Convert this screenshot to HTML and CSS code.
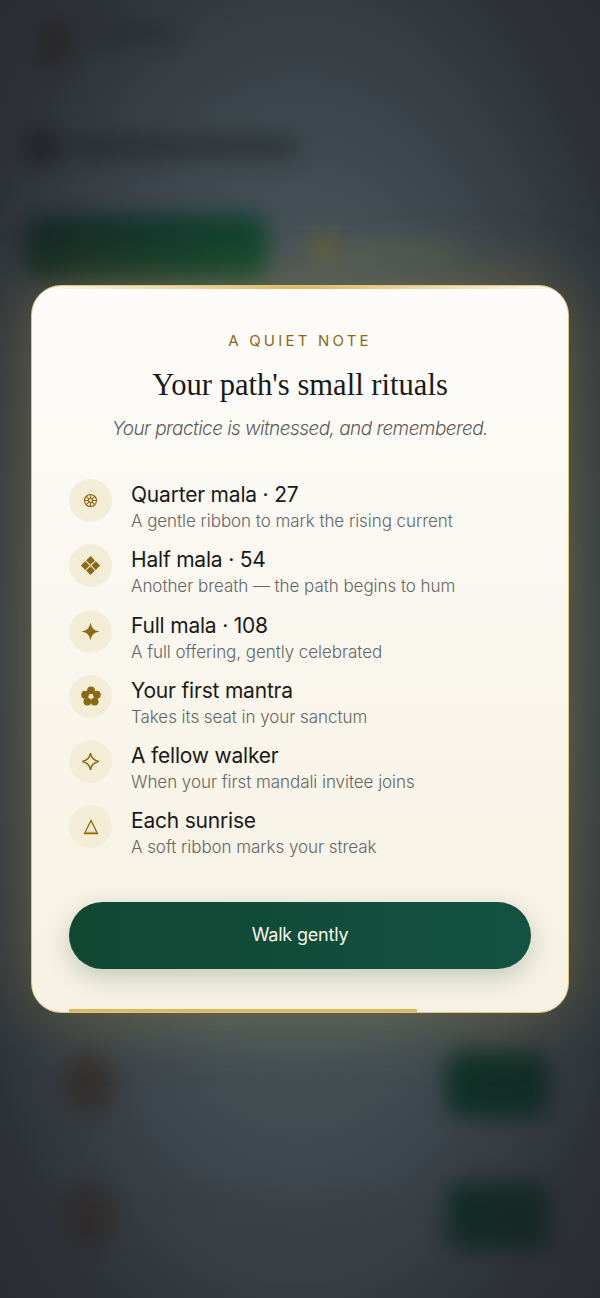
FILE: index.html
```html
<!DOCTYPE html>
<html lang="en">
<head>
<meta charset="utf-8">
<title>A quiet note</title>
<link rel="stylesheet" href="styles.css">
</head>
<body>
<div class="page" aria-hidden="true">
  <div class="top-bar"><span class="logo"></span><span class="brand"></span></div>
  <div class="heading"><span class="heading-icon"></span><span class="heading-text"></span></div>
  <div class="actions"><span class="cta"></span><span class="gold-dot"></span><span class="action-text"></span></div>
  <div class="list">
    <div class="list-row"><span class="avatar"></span><span class="row-lines"><i class="line-a"></i><i class="line-b"></i></span><span class="row-btn"></span></div>
    <div class="list-row"><span class="avatar"></span><span class="row-lines"><i class="line-a"></i><i class="line-b"></i></span><span class="row-btn"></span></div>
  </div>
</div>
<div class="overlay">
  <section class="modal">
    <span class="top-line"></span>
    <p class="eyebrow">A QUIET NOTE</p>
    <h1 class="title">Your path's small rituals</h1>
    <p class="subtitle">Your practice is witnessed, and remembered.</p>
    <ul class="rituals">
      <li class="ritual">
        <span class="medal"><svg class="ic-small" viewBox="0 0 16 16"><g fill="none" stroke="#8b6914" stroke-width="1.2"><circle cx="8" cy="8" r="6.400"/><circle cx="8" cy="8" r="2.100"/><path d="M8 1.600V5.900M8 10.100v4.300M1.600 8h4.300M10.100 8h4.300M3.500 3.500l3 3M9.500 9.500l3 3M12.500 3.500l-3 3M6.500 9.500l-3 3"/></g></svg></span>
        <div class="ritual-text"><h2 class="ritual-name">Quarter mala · 27</h2><p class="ritual-desc">A gentle ribbon to mark the rising current</p></div>
      </li>
      <li class="ritual">
        <span class="medal"><svg class="ic" viewBox="0 0 24 24"><path fill="#8b6914" d="M12 1.200l5 5-5 5-5-5zM12 12.800l5 5-5 5-5-5zM6 7l5 5-5 5-5-5zM18 7l5 5-5 5-5-5z"/></svg></span>
        <div class="ritual-text"><h2 class="ritual-name">Half mala · 54</h2><p class="ritual-desc">Another breath — the path begins to hum</p></div>
      </li>
      <li class="ritual">
        <span class="medal"><svg class="ic" viewBox="0 0 24 24"><path fill="#8b6914" d="M12 1.500C13 8 16 11 22.500 12 16 13 13 16 12 22.500 11 16 8 13 1.500 12 8 11 11 8 12 1.500z"/></svg></span>
        <div class="ritual-text"><h2 class="ritual-name">Full mala · 108</h2><p class="ritual-desc">A full offering, gently celebrated</p></div>
      </li>
      <li class="ritual">
        <span class="medal"><svg class="ic-flower" viewBox="0 0 24 24"><g fill="#8b6914"><circle cx="12" cy="5.400" r="4.700"/><circle cx="5" cy="10.500" r="4.700"/><circle cx="19" cy="10.500" r="4.700"/><circle cx="7.600" cy="18.700" r="4.700"/><circle cx="16.400" cy="18.700" r="4.700"/></g><circle cx="12" cy="12.400" r="2.700" fill="#f3ecd6"/></svg></span>
        <div class="ritual-text"><h2 class="ritual-name">Your first mantra</h2><p class="ritual-desc">Takes its seat in your sanctum</p></div>
      </li>
      <li class="ritual">
        <span class="medal"><svg class="ic" viewBox="0 0 24 24"><path fill="none" stroke="#8b6914" stroke-width="1.700" d="M12 2.500C13 8.500 15.500 11 21.500 12 15.500 13 13 15.500 12 21.500 11 15.500 8.500 13 2.500 12 8.500 11 11 8.500 12 2.500z"/></svg></span>
        <div class="ritual-text"><h2 class="ritual-name">A fellow walker</h2><p class="ritual-desc">When your first mandali invitee joins</p></div>
      </li>
      <li class="ritual">
        <span class="medal"><svg class="ic-tri" viewBox="0 0 18 18"><path fill="none" stroke="#8b6914" stroke-width="1.300" d="M9 2.500L2.500 15.500h13z"/><path fill="none" stroke="#c9a227" stroke-width="1.200" d="M4 14.300h10"/></svg></span>
        <div class="ritual-text"><h2 class="ritual-name">Each sunrise</h2><p class="ritual-desc">A soft ribbon marks your streak</p></div>
      </li>
    </ul>
    <button class="walk" type="button">Walk gently</button>
    <span class="progress"></span>
  </section>
</div>
</body>
</html>
```
FILE: styles.css
```css
* { box-sizing: border-box; }
html, body { margin: 0; height: 100%; }
body {
  position: relative;
  width: 600px;
  height: 1298px;
  overflow: hidden;
  background: #5f6e74;
  font-family: "Inter", "Liberation Sans", sans-serif;
}
.page {
  height: 1298px;
  padding: 14px 24px 0;
  filter: blur(11px);
  background: #5f6e74;
}
.top-bar { display: flex; align-items: center; gap: 12px; height: 62px; padding-left: 14px; }
.logo { width: 36px; height: 48px; border-radius: 50%; background: #4a2e14; opacity: .6; }
.brand { width: 95px; height: 16px; margin-bottom: 22px; background: #2c3030; border-radius: 8px; opacity: .5; }
.heading { display: flex; align-items: center; gap: 8px; margin-top: 54px; height: 34px; }
.heading-icon { width: 36px; height: 34px; border-radius: 50%; background: #141418; opacity: .75; }
.heading-text { width: 232px; height: 20px; background: #2a322e; border-radius: 6px; opacity: .65; }
.actions { display: flex; align-items: center; margin-top: 51px; height: 66px; }
.cta { width: 244px; height: 66px; border-radius: 20px; background: linear-gradient(90deg, #0a3e2a, #0b5a38); }
.gold-dot { width: 30px; height: 30px; margin-left: 42px; border-radius: 50%; background: #a08a30; opacity: .6; }
.action-text { width: 110px; height: 14px; margin-left: 10px; background: #a09a6a; opacity: .4; }
.list { margin-top: 768px; display: flex; flex-direction: column; gap: 62px; }
.list-row { display: flex; align-items: center; height: 70px; padding-left: 38px; }
.avatar { width: 54px; height: 66px; border-radius: 50%; background: #4e3216; opacity: .55; }
.row-lines { flex: 1; display: flex; flex-direction: column; gap: 18px; padding: 0 34px; }
.row-lines i { display: block; height: 9px; background: #5a5a44; opacity: .4; }
.line-a { width: 240px; }
.line-b { width: 130px; margin-left: 90px; }
.row-btn { width: 104px; height: 68px; margin-right: 26px; border-radius: 18px; background: #07452c; }
.overlay {
  position: absolute;
  inset: 0;
  display: flex;
  justify-content: center;
  align-items: flex-start;
  padding-top: 285px;
  background: radial-gradient(ellipse 470px 960px at 50% 50%, rgba(20, 28, 36, .3) 0%, rgba(20, 28, 36, .34) 42%, rgba(28, 28, 34, .76) 82%, rgba(30, 30, 36, .86) 100%);
}
.modal {
  position: relative;
  width: 538px;
  height: 728px;
  padding: 45px 37px 0;
  border: 1px solid #e0c67a;
  border-radius: 30px;
  background: linear-gradient(180deg, #fdfcfa 0%, #f6f1e2 100%);
  box-shadow: 0 0 70px rgba(205, 170, 50, .3);
  text-align: center;
  overflow: hidden;
}
.top-line {
  position: absolute;
  top: -1px;
  left: 0;
  right: 0;
  height: 4px;
  background: linear-gradient(90deg, rgba(220, 185, 95, 0), #dcb95f 50%, rgba(220, 185, 95, 0));
}
.eyebrow {
  margin: 0;
  font-size: 15px;
  line-height: 20px;
  letter-spacing: 3.200px;
  color: #8b6914;
  font-weight: 400;
}
.title {
  margin: 14px 0 0;
  font: 400 30.600px/40px "Liberation Serif", serif;
  color: #1a1a1a;
}
.subtitle {
  margin: 11px 0 0;
  font-size: 19px;
  line-height: 26px;
  font-style: italic;
  font-weight: 300;
  letter-spacing: -.55px;
  color: #5c5c5c;
}
.rituals {
  list-style: none;
  margin: 37px 0 0;
  padding: 0;
  display: flex;
  flex-direction: column;
  gap: 11px;
  text-align: left;
}
.ritual { display: flex; align-items: flex-start; gap: 19px; height: 54.300px; }
.medal {
  display: flex;
  align-items: center;
  justify-content: center;
  flex: none;
  width: 43px;
  height: 43px;
  border-radius: 50%;
  background: radial-gradient(circle, #f3ecd4 0%, #f3eddb 100%);
}
.ic { width: 21px; height: 21px; }
.ic-small { width: 15px; height: 15px; }
.ic-flower { width: 20px; height: 20px; }
.ic-tri { width: 18px; height: 18px; }
.ritual-text { margin-top: 2px; }
.ritual-name {
  margin: 0;
  font-size: 21px;
  line-height: 28px;
  font-weight: 400;
  letter-spacing: -.2px;
  color: #1a1a1a;
}
.ritual-desc {
  margin: 0;
  font-size: 17px;
  line-height: 24px;
  font-weight: 300;
  letter-spacing: -.05px;
  color: #666;
}
.walk {
  display: block;
  width: 462px;
  height: 67px;
  margin-top: 42px;
  border: 0;
  border-radius: 34px;
  background: linear-gradient(90deg, #0f4733, #135240);
  box-shadow: 0 8px 24px rgba(15, 70, 49, .22);
  color: #f8f5ec;
  font: 400 18px/24px "Inter", "Liberation Sans", sans-serif;
  letter-spacing: -.2px;
}
.progress {
  position: absolute;
  left: 37px;
  bottom: 0;
  width: 348px;
  height: 3px;
  background: #dcb95f;
}
```
